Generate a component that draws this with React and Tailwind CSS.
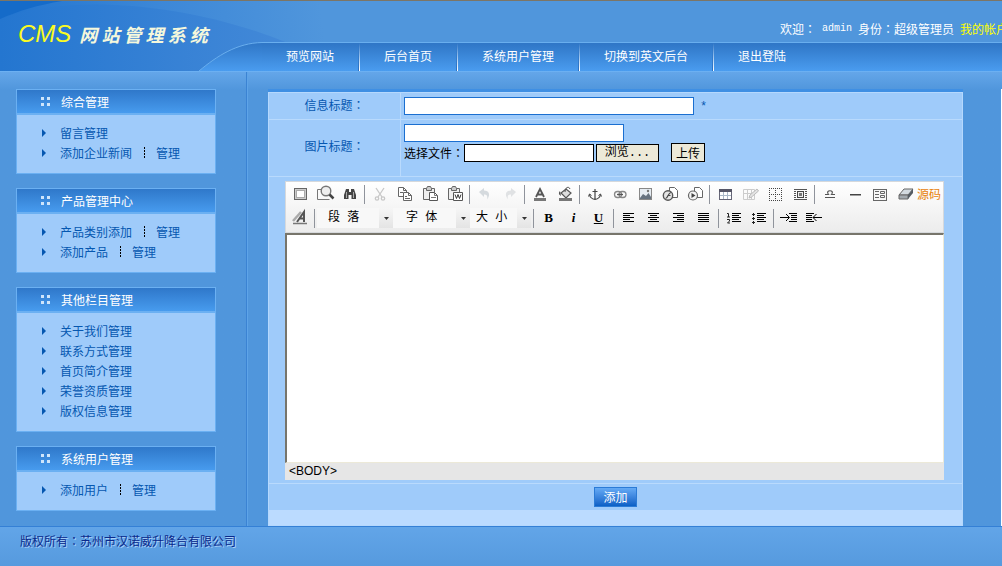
import React from "react";

const NAV = ["预览网站", "后台首页", "系统用户管理", "切换到英文后台", "退出登陆"];

const MENU = [
  { title: "综合管理", rows: [["留言管理"], ["添加企业新闻", "管理"]] },
  { title: "产品管理中心", rows: [["产品类别添加", "管理"], ["添加产品", "管理"]] },
  {
    title: "其他栏目管理",
    rows: [["关于我们管理"], ["联系方式管理"], ["首页简介管理"], ["荣誉资质管理"], ["版权信息管理"]],
  },
  { title: "系统用户管理", rows: [["添加用户", "管理"]] },
];

// The Japanese face centres the full-width colon in its cell.
function Colon() {
  return <span className="font-['Noto_Sans_CJK_JP',sans-serif]">：</span>;
}

function Lines({ rows, x = 4, color = "#000" }) {
  return rows.map(([dx, w], i) => (
    <rect key={i} x={x + dx} y={5 + i * 2} width={w} height="1" fill={color} />
  ));
}

const pages = (
  <g fill="#fff" stroke="#666">
    <path d="M3.500 3.500h5l3 3v6h-8z" />
    <path d="M8.500 3.500v3h3M5 8.500h3" fill="none" />
    <path d="M8.500 8.500h5l3 3v5h-8z" />
    <path d="M13.500 8.500v3h3M10 12.500h2M10 14.500h5" fill="none" />
  </g>
);

const clip = (
  <g stroke="#666">
    <path d="M3.500 4.500h11v11h-11z" fill="#eee" />
    <path d="M6.500 6.500v-2l1-2h3l1 2v2z" fill="#ccc" />
  </g>
);

const ICONS = {
  全屏: (
    <g>
      <rect x="4.500" y="4.500" width="12" height="11" fill="#ccc" stroke="#666" />
      <rect x="6.500" y="6.500" width="8" height="7" fill="#fff" stroke="#aaa" />
    </g>
  ),
  预览: (
    <g fill="none" stroke="#777">
      <path d="M7 5.500H2.500v10h12" />
      <circle cx="11" cy="7" r="4.800" fill="#eee" strokeWidth="1.400" />
      <path d="m14.500 10.500 4 4" strokeWidth="2.500" stroke="#444" />
    </g>
  ),
  查找: (
    <g fill="#444">
      <path d="M6 5h3v3h2V5h3l2 6v4h-4.500v-4h-3v4H4v-4z" />
      <path d="M6.500 8v6M13.500 8v6" stroke="#aaa" />
    </g>
  ),
  剪切: (
    <g fill="none" stroke="#c8c8c8" strokeWidth="1.300">
      <path d="m6 4 6 9M14 4l-6 9" />
      <circle cx="7" cy="14.500" r="1.700" />
      <circle cx="13" cy="14.500" r="1.700" />
    </g>
  ),
  复制: pages,
  粘贴: (
    <g>
      {clip}
      <path d="M9.500 8.500h5l3 3v5h-8z" fill="#fff" stroke="#555" />
      <path d="M14.500 8.500v3h3M11 13.500h5" fill="none" stroke="#777" />
    </g>
  ),
  粘贴文字: (
    <g>
      {clip}
      <path d="M8.500 8.500h9v8h-9z" fill="#fff" stroke="#555" />
      <path d="m10 10.500 1.500 4 1.500-4 1.500 4 1.500-4" fill="none" stroke="#333" />
    </g>
  ),
  撤销: <path d="m4 8 5-4v2.500c5 0 7 4 3 9 1-4-.5-5-3-5V13z" fill="#d5dade" />,
  重做: <path d="m16 8-5-4v2.500c-5 0-7 4-3 9-1-4 .5-5 3-5V13z" fill="#e0e2e4" />,
  文字颜色: (
    <g>
      <path d="m6 13 4-8 4 8M7.500 10.500h5" fill="none" stroke="#555" strokeWidth="1.800" />
      <rect x="4" y="14" width="12" height="3" fill="#777" />
    </g>
  ),
  背景颜色: (
    <g>
      <path d="m6 9 5-4 5 4-5 5z" fill="#ddd" stroke="#555" strokeWidth="1.200" />
      <path d="M10 8c0-5 4-6 5-3" fill="none" stroke="#555" />
      <path d="M5 7c-2 2-1 4 1 5z" fill="#555" />
      <rect x="4" y="14" width="13" height="3" fill="#777" />
    </g>
  ),
  锚点: (
    <g fill="none" stroke="#444" strokeWidth="1.200">
      <path d="M10 5v11M7.500 7.500h5M4.500 10.500c.5 3 3 4.500 5.500 5 2.500-.5 5-2 5.500-5" />
      <path d="m3.500 12.500 1-2.500 2 1.500M16.500 12.500l-1-2.500-2 1.500" strokeWidth="1" />
    </g>
  ),
  链接: (
    <g fill="none" stroke="#888" strokeWidth="1.300">
      <rect x="4.500" y="7.500" width="7" height="6" rx="3" />
      <rect x="9" y="7.500" width="7" height="6" rx="3" />
      <path d="M7 10.500h6" stroke="#555" />
    </g>
  ),
  图片: (
    <g>
      <rect x="4.500" y="4.500" width="12" height="11" fill="#e6ecf2" stroke="#888" />
      <path d="m5 14 3-4 3 2 2.500-3L16 13v2H5z" fill="#66727f" />
      <circle cx="13" cy="7" r="1.200" fill="#777" />
    </g>
  ),
  动画: (
    <g>
      <path d="M9.500 3.500h5l3 3v7h-8z" fill="#fff" stroke="#666" />
      <circle cx="8" cy="11.500" r="4.700" fill="#e4e4e4" stroke="#555" strokeWidth="1.400" />
      <path d="M11 8.500c-3 0-3 6-5.500 6M7.500 11.500h3" fill="none" stroke="#444" strokeWidth="1.200" />
    </g>
  ),
  视频: (
    <g>
      <path d="M9.500 3.500h5l3 3v7h-8z" fill="#fff" stroke="#666" />
      <circle cx="8" cy="11.500" r="4.500" fill="#f4f4f4" stroke="#666" strokeWidth="1.200" />
      <path d="m6.500 9 4 2.500-4 2.500z" fill="#444" />
    </g>
  ),
  表格: (
    <g>
      <rect x="4.500" y="5.500" width="12" height="10" fill="#fff" stroke="#667" />
      <rect x="4" y="5" width="13" height="3" fill="#556" />
      <path d="M5 11.500h11M8.500 8v7M12.500 8v7" stroke="#aab8c8" />
    </g>
  ),
  编辑表格: (
    <g stroke="#ccc" fill="none">
      <path d="M3.500 5.500h11v10h-11zM3.500 9.500h11M7.500 5.500v10M11.500 5.500v10" />
      <path d="m9 14 1-3 7-6 1.500 2-7 6z" fill="#e4e4e4" stroke="#bbb" />
    </g>
  ),
  边框: (
    <path
      d="M4.500 4v13M10.500 4v13M16.500 4v13M4 4.500h13M4 10.500h13M4 16.500h13"
      stroke="#444"
      strokeDasharray="1 1"
    />
  ),
  图层: (
    <g>
      <path d="M4 5.500h13M4 15.500h13M4 7.500h2M4 9.500h2M4 11.500h2M4 13.500h2M15 7.500h2M15 9.500h2M15 11.500h2M15 13.500h2" stroke="#555" />
      <rect x="7.500" y="7.500" width="6" height="6" fill="#eee" stroke="#444" />
      <rect x="9" y="9" width="3" height="3" fill="#777" />
    </g>
  ),
  特殊符号: (
    <path
      d="M5 10.500h3.500c-4-5 7-5 3 0H15M5 13.500h10"
      fill="none"
      stroke="#555"
      strokeWidth="1.200"
    />
  ),
  水平线: <rect x="5" y="10" width="11" height="1.500" fill="#444" />,
  字段集: (
    <g fill="none" stroke="#666">
      <rect x="3.500" y="5.500" width="13" height="11" fill="#f6f6f6" />
      <path d="M5 7.500h4M5 10.500h4M5 13.500h4M10.500 7.500h4v2h-4zM10.500 11.500h4v2h-4z" />
    </g>
  ),
  清除格式: (
    <g>
      <path d="m9 5h9l-5 6H4z" fill="#d3dae0" stroke="#666" />
      <path d="M4 11h9v4H4z" fill="#a2a9af" stroke="#666" />
      <path d="m13 11 5-6v4l-5 6z" fill="#555c63" />
    </g>
  ),
  样式: (
    <g>
      <path d="m3 13 8-9" stroke="#aaa" strokeWidth="2.500" />
      <path d="m7 14 7-10v10M9.500 10.500h4" fill="none" stroke="#555" strokeWidth="2" />
      <path d="M3 15.500h14" stroke="#777" strokeWidth="1.500" />
    </g>
  ),
  左对齐: <Lines rows={[[0, 11], [0, 7], [0, 11], [0, 7], [0, 11]]} />,
  居中: <Lines rows={[[0, 11], [2, 7], [0, 11], [2, 7], [0, 11]]} />,
  右对齐: <Lines rows={[[0, 11], [4, 7], [0, 11], [4, 7], [0, 11]]} />,
  两端对齐: <Lines rows={[[0, 11], [0, 11], [0, 11], [0, 11], [0, 11]]} />,
  编号列表: (
    <g>
      <Lines x={8} rows={[[0, 9], [0, 7], [0, 9], [0, 7], [0, 9]]} />
      <path d="M3 5.500h1.500V9M3 9h3M3 11.500h2.500v1.500L3.500 15H6" fill="none" stroke="#222" />
    </g>
  ),
  项目列表: (
    <g>
      <Lines x={8} rows={[[0, 9], [0, 7], [0, 9], [0, 7], [0, 9]]} />
      <path d="M3 6h3v1H3zM4 5h1v3H4zM3 10h3v1H3zM4 9h1v3H4zM3 14h3v1H3zM4 13h1v3H4z" fill="#222" />
    </g>
  ),
  增加缩进: (
    <g>
      <Lines x={10} rows={[[0, 8], [2, 6], [2, 6], [2, 6], [0, 8]]} />
      <path d="M1 9.500h9M7 6l3.500 3.500L7 13" fill="none" stroke="#000" />
    </g>
  ),
  减少缩进: (
    <g>
      <Lines x={2} rows={[[0, 8], [0, 6], [0, 6], [0, 6], [0, 8]]} />
      <path d="M18 9.500H9M12.500 6 9 9.500l3.500 3.500" fill="none" stroke="#000" />
    </g>
  ),
};

const GROUPS = [
  ["全屏", "预览", "查找"],
  ["剪切", "复制", "粘贴", "粘贴文字"],
  ["撤销", "重做"],
  ["文字颜色", "背景颜色"],
  ["锚点", "链接", "图片", "动画", "视频"],
  ["表格", "编辑表格", "边框", "图层"],
  ["特殊符号", "水平线", "字段集", "清除格式"],
];

const GROUPS_2 = [
  ["左对齐", "居中", "右对齐", "两端对齐"],
  ["编号列表", "项目列表"],
  ["增加缩进", "减少缩进"],
];

function Tool({ name }) {
  return (
    <button type="button" aria-label={name} className="flex h-6 w-[25px] shrink-0 items-center justify-center">
      <svg width="20" height="20" viewBox="0 0 20 20" aria-hidden="true">
        {ICONS[name]}
      </svg>
    </button>
  );
}

function Separator() {
  return (
    <span className="flex h-6 w-[5px] shrink-0 items-center justify-center">
      <span className="h-[19px] w-px bg-[#8f939b]" />
    </span>
  );
}

function Groups({ groups }) {
  return groups.map((group, i) => (
    <React.Fragment key={i}>
      {i > 0 && <Separator />}
      {group.map((name) => (
        <Tool key={name} name={name} />
      ))}
    </React.Fragment>
  ));
}

function Combo({ label, className }) {
  return (
    <div className={"flex h-5 shrink-0 items-center bg-[#f8f8f8] " + className}>
      <select
        aria-label={label.replace(" ", "")}
        className="h-5 min-w-0 flex-1 appearance-none bg-transparent font-['Liberation_Mono','Noto_Sans_CJK_SC',monospace] text-[12px] leading-5 text-black outline-none"
      >
        <option>{label}</option>
      </select>
      <span className="flex h-5 w-[14px] items-center justify-center bg-linear-to-b from-[#f6f6f6] to-[#e4e4e4]">
        <svg width="5" height="3" viewBox="0 0 5 3" aria-hidden="true">
          <path d="M0 0h5L2.500 3z" fill="#333" />
        </svg>
      </span>
    </div>
  );
}

function Header() {
  return (
    <header className="relative h-[72px] overflow-hidden border-t border-b border-t-[#7c7565] border-b-[#6cb0f2] bg-[#5096dc]">
      <svg className="absolute top-0 left-0" width="340" height="71" viewBox="0 0 340 71" aria-hidden="true">
        <defs>
          <linearGradient id="sweep" gradientUnits="userSpaceOnUse" x1="0" y1="40" x2="320" y2="0">
            <stop offset="0" stopColor="#2174cf" />
            <stop offset="0.500" stopColor="#3c87d7" />
            <stop offset="1" stopColor="#5096dc" />
          </linearGradient>
          <linearGradient id="bend" x1="0" y1="0" x2="1" y2="0">
            <stop offset="0" stopColor="#2476d0" />
            <stop offset="1" stopColor="#4389d8" />
          </linearGradient>
        </defs>
        <path d="M0 0h340v71H0z" fill="url(#sweep)" />
        <path d="M0 18C60-6 180-2 288 42L200 71H0z" fill="url(#bend)" />
        <path d="M0 0h62C38 4 18 10 0 18z" fill="#156bc9" />
      </svg>
      <div className="relative flex h-[41px] items-end justify-between gap-4">
        <h1 className="flex shrink-0 items-center gap-2 pl-[18px] whitespace-nowrap italic">
          <span className="font-['Liberation_Sans',sans-serif] text-[24px] leading-4 text-[#fbfb22]">CMS</span>
          <span className="text-[18px] leading-4 font-bold text-[#f5f8dc]">网 站 管 理 系 统</span>
        </h1>
        <p className="-mr-[6px] flex shrink-0 gap-[6px] pb-[3px] whitespace-nowrap text-white">
          <span>欢迎<Colon /></span>
          <span className="font-['Liberation_Mono',monospace] text-[10px]">admin</span>
          <span>身份<Colon />超级管理员</span>
          <a href="#account" className="text-[#ffff00]">我的帐户</a>
        </p>
      </div>
      <div className="relative flex h-[29px]">
        <svg className="ml-[199px] shrink-0" width="63" height="29" viewBox="0 0 63 29" aria-hidden="true">
          <defs>
            <linearGradient id="bar" x1="0" y1="0" x2="0" y2="1">
              <stop offset="0" stopColor="#2f76c6" />
              <stop offset="1" stopColor="#4a9cef" />
            </linearGradient>
          </defs>
          <path d="M0 29C18 14 38 1 63 .5V29z" fill="url(#bar)" />
          <path d="M0 29C18 14 38 1 63 .5" fill="none" stroke="#69aeee" />
        </svg>
        <nav className="flex flex-1 border-t border-[#69aeee] bg-linear-to-b from-[#2f76c6] to-[#4a9cef]">
          {NAV.map((item, i) => (
            <a key={item} href="#nav" className="flex shrink-0 whitespace-nowrap text-white">
              <span className="pt-[3px] pr-6 pl-6">{item}</span>
              {i < NAV.length - 1 && (
                <span className="flex">
                  <span className="w-px bg-linear-to-b from-transparent to-[#2a6fc0]" />
                  <span className="w-px bg-linear-to-b from-transparent to-white" />
                </span>
              )}
            </a>
          ))}
        </nav>
      </div>
    </header>
  );
}

function MenuSection({ title, rows }) {
  return (
    <section className="border border-[#6bb0f2] bg-[#9fcbfa]">
      <h2 className="flex h-[25px] items-center gap-[11px] border-b-2 border-[#6bb0f2] bg-linear-to-b from-[#2f78ca] to-[#479bee] pl-6 text-white">
        <svg width="9" height="9" viewBox="0 0 9 9" aria-hidden="true">
          <path d="M0 0h3v3H0zM6 0h3v3H6zM0 6h3v3H0zM6 6h3v3H6z" fill="#cfe5fb" />
        </svg>
        {title}
      </h2>
      <ul className="pt-2 pb-[10px]">
        {rows.map((links) => (
          <li key={links[0]} className="flex h-5 items-center pl-[25px] text-[#0557b0]">
            <svg className="mr-[14px]" width="4" height="8" viewBox="0 0 4 8" aria-hidden="true">
              <path d="M0 0l4 4-4 4z" fill="#0557b0" />
            </svg>
            <a href="#menu">{links[0]}</a>
            {links[1] && (
              <>
                <svg className="mr-[11px] ml-3" width="1" height="12" viewBox="0 0 1 12" aria-hidden="true">
                  <path d="M.5 0v12" stroke="#000" strokeDasharray="2 1" />
                </svg>
                <a href="#manage">{links[1]}</a>
              </>
            )}
          </li>
        ))}
      </ul>
    </section>
  );
}

function Editor() {
  const format = "w-[25px] font-['Liberation_Serif',serif] text-[13px] font-bold text-black";
  return (
    <div>
      <div className="border border-[#d6d9dc] bg-linear-to-b from-white to-[#ececec] pb-[2px] pl-px">
        <div className="flex">
          <Groups groups={GROUPS} />
          <button type="button" className="shrink-0 whitespace-nowrap text-[#e8820c]">源码</button>
        </div>
        <div className="flex items-center">
          <Tool name="样式" />
          <Separator />
          <Combo label="段 落" className="w-[78px] pr-[2px] pl-[11px]" />
          <Combo label="字 体" className="w-[75px] pl-[11px]" />
          <Combo label="大 小" className="w-[61px] pl-[6px]" />
          <Separator />
          <button type="button" className={format}>B</button>
          <button type="button" className={format + " italic"}>i</button>
          <button type="button" className={format + " underline"}>U</button>
          <Separator />
          <Groups groups={GROUPS_2} />
        </div>
      </div>
      <textarea
        aria-label="内容"
        className="block h-[230px] w-full resize-none border-t-2 border-r border-b border-l-2 border-t-[#77756b] border-r-[#ece9d8] border-b-[#ece9d8] border-l-[#77756b] bg-white p-2 text-black outline-none"
      />
      <div className="h-[17px] bg-[#e6e6e6] pl-1 font-['Liberation_Sans',sans-serif] leading-[17px] text-black">
        &lt;BODY&gt;
      </div>
    </div>
  );
}

function Form() {
  const field = "h-[18px] border bg-white px-1 text-black outline-none";
  return (
    <form className="border-t-[3px] border-[#3f8fe3]" onSubmit={(e) => e.preventDefault()}>
      <div className="border border-[#b5d8fd] bg-[#9fcbfa] text-[#0557b0]">
        <div className="flex border-b border-[#b9dafd]">
          <label htmlFor="title" className="flex w-[132px] shrink-0 justify-center border-r border-[#b9dafd] pt-[2px]">
            信息标题<Colon />
          </label>
          <div className="flex items-center gap-[6px] py-1 pl-[3px]">
            <input id="title" type="text" className={field + " w-[290px] border-[#1b6fd0]"} />
            <span className="pt-[2px] font-['Liberation_Mono',monospace] leading-4">*</span>
          </div>
        </div>
        <div className="flex border-b border-[#b9dafd]">
          <label htmlFor="caption" className="flex w-[132px] shrink-0 items-center justify-center border-r border-[#b9dafd] pb-1">
            图片标题<Colon />
          </label>
          <div className="flex flex-col items-start gap-px pt-1 pb-[14px] pl-[3px]">
            <input id="caption" type="text" className={field + " w-[220px] border-[#1b6fd0]"} />
            <div className="flex h-[19px] items-center text-black">
              <label htmlFor="file">选择文件<Colon /></label>
              <input id="file" type="text" className={field + " w-[130px] border-black"} />
              <button
                type="button"
                className="ml-[2px] h-[18px] w-[63px] border border-black bg-[#ece9d8] font-['Liberation_Mono','Noto_Sans_CJK_SC',monospace] leading-4"
              >
                浏览...
              </button>
              <button type="submit" className="ml-3 h-[19px] w-[34px] border border-black bg-[#ece9d8] leading-4">
                上传
              </button>
            </div>
          </div>
        </div>
        <div className="border-b border-[#b9dafd] pt-1 pr-[18px] pb-[3px] pl-4">
          <Editor />
        </div>
        <div className="flex justify-center py-[3px]">
          <button
            type="submit"
            className="h-5 w-[43px] border border-[#2b7bd6] bg-linear-to-b from-[#65aaf5] to-[#0a60c6] leading-[18px] text-white"
          >
            添加
          </button>
        </div>
        <div className="h-[15px] bg-[#bbdbff]" />
      </div>
    </form>
  );
}

export default function App() {
  return (
    <div className="flex min-h-screen flex-col bg-[#5096dc] font-['Noto_Sans_CJK_SC',sans-serif] text-[12px] leading-5">
      <Header />
      <div className="flex bg-linear-to-b from-[#64a6e9] to-[#5096dc] to-[18px]">
        <aside className="flex w-[248px] shrink-0 border-r border-[#5ea4e8]">
          <div className="flex flex-1 flex-col gap-[14px] border-r border-[#3b83d3] pt-[17px] pr-[30px] pb-[15px] pl-4">
            {MENU.map((section) => (
              <MenuSection key={section.title} {...section} />
            ))}
          </div>
        </aside>
        <main className="min-w-0 flex-1 pt-[17px] pr-[38px] pl-5">
          <Form />
        </main>
        <div className="mt-[17px] w-px bg-white" />
      </div>
      <footer className="flex-1 border-t border-[#3480d6] bg-linear-to-b from-[#62a5e8] to-[#569ade] pt-1 pb-[14px] pl-5 text-[#0a2a8c] text-shadow-[1px_1px_0_#a9d0f8]">
        版权所有<Colon />苏州市汉诺威升降台有限公司
      </footer>
    </div>
  );
}
